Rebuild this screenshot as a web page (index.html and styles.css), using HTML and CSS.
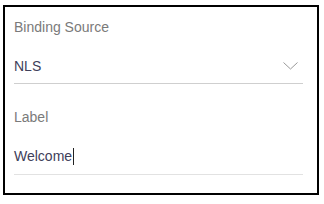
FILE: index.html
```html
<!DOCTYPE html>
<html lang="en">
<head>
    <meta charset="UTF-8">
    <meta name="viewport" content="width=device-width, initial-scale=1.0">
    <title>Binding</title>
    <link rel="stylesheet" href="styles.css">
</head>
<body>
    <div class="panel">
        <div class="field">
            <div class="field-label">Binding Source</div>
            <div class="field-value select">
                <span>NLS</span>
                <svg class="chevron" width="15" height="8" viewBox="0 0 15 8">
                    <polyline points="0.5,0.5 7.5,7 14.5,0.5" fill="none" stroke="#999" stroke-width="1"/>
                </svg>
            </div>
        </div>
        <div class="field">
            <div class="field-label">Label</div>
            <div class="field-value input">
                <span>Welcome</span><span class="caret"></span>
            </div>
        </div>
    </div>
</body>
</html>
```

FILE: styles.css
```css
body {
    margin: 0;
    font-family: "Liberation Sans", Arial, sans-serif;
    background: #fff;
}

/* outer box */
.panel {
    box-sizing: border-box;
    width: 316px;
    height: 190px;
    margin: 5px 0 0 3px;
    padding: 10px 14px 0 9px;
    border: 2px solid #000;
}

.field + .field {
    margin-top: 23px;
}

.field-label {
    font-size: 14px;
    line-height: 20px;
    color: #7a7a7a;
    margin-bottom: 19px;
}

.field-value {
    display: flex;
    align-items: center;
    font-size: 14px;
    line-height: 20px;
    color: #40405a;
    padding-bottom: 7px;
    border-bottom: 1px solid #cfcfcf;
}

.select {
    justify-content: space-between;
}

.chevron {
    margin-right: 5px;
    margin-top: -1px;
}

.input {
    border-bottom-color: #e2e2e2;
    padding-bottom: 8px;
}

.caret {
    display: inline-block;
    width: 1px;
    height: 17px;
    margin-left: 1px;
    background: #222;
}
```
